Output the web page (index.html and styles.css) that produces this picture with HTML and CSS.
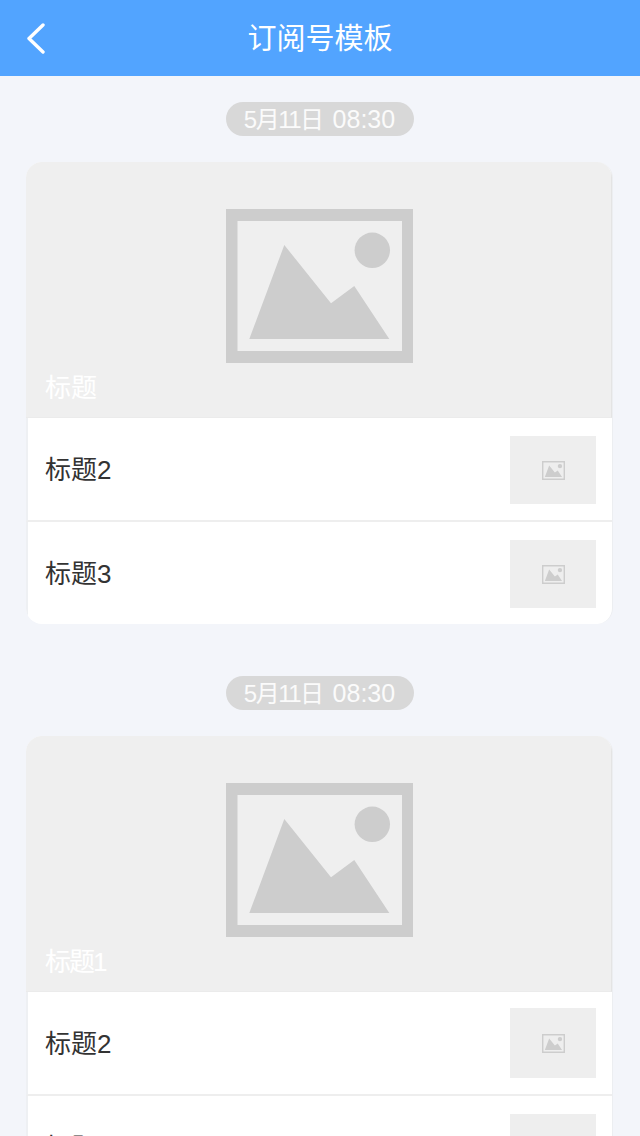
FILE: index.html
```html
<!DOCTYPE html>
<html lang="zh-CN">
<head>
  <meta charset="UTF-8" />
  <title>订阅号模板</title>
  <meta name="viewport" content="width=device-width, initial-scale=1" />
  <link rel="stylesheet" href="styles.css">
</head>
<body>

  <svg class="sprite" width="0" height="0">
    <symbol id="pic" viewBox="0 0 187.5 154">
      <path fill="#cdcdcd" fill-rule="evenodd" d="M0 0H187.5V154H0ZM11.5 12V142H176V12Z" />
      <circle fill="#cdcdcd" cx="146.3" cy="41.3" r="17.7" />
      <path fill="#cdcdcd" d="M58.3 36L105 94.3L128.3 77L163.3 130H23.3Z" />
    </symbol>
  </svg>

  <header class="topbar">
    <svg class="back" viewBox="0 0 20 32" width="20" height="32">
      <path d="M17 3L3 16.5L17 30" fill="none" stroke="#fff" stroke-width="3.4" stroke-linecap="round" stroke-linejoin="round" />
    </svg>
    <h1>订阅号模板</h1>
  </header>

  <main class="feed">
    <!-- first message -->
    <section class="msg">
      <div class="time"><span class="pill"><span class="date">5月11日</span><span class="clock">08:30</span></span></div>
      <div class="card">
        <div class="hero">
          <svg class="hero-pic"><use href="#pic" /></svg>
          <div class="hero-title">标题</div>
        </div>
        <div class="row">
          <div class="row-title">标题2</div>
          <div class="thumb"><svg class="thumb-pic"><use href="#pic" /></svg></div>
        </div>
        <div class="row">
          <div class="row-title">标题3</div>
          <div class="thumb"><svg class="thumb-pic"><use href="#pic" /></svg></div>
        </div>
      </div>
    </section>

    <!-- second message -->
    <section class="msg">
      <div class="time"><span class="pill"><span class="date">5月11日</span><span class="clock">08:30</span></span></div>
      <div class="card">
        <div class="hero">
          <svg class="hero-pic"><use href="#pic" /></svg>
          <div class="hero-title hero-title-tight">标题1</div>
        </div>
        <div class="row">
          <div class="row-title">标题2</div>
          <div class="thumb thumb-tall"><svg class="thumb-pic"><use href="#pic" /></svg></div>
        </div>
        <div class="row">
          <div class="row-title">标题3</div>
          <div class="thumb"><svg class="thumb-pic"><use href="#pic" /></svg></div>
        </div>
      </div>
    </section>
  </main>

</body>
</html>
```
FILE: styles.css
```css
* {
  margin: 0;
  padding: 0;
  box-sizing: border-box;
}

html, body {
  height: 100%;
  overflow: hidden;
  background: #f3f5fa;
  font-family: "Liberation Sans", "Noto Sans CJK SC", sans-serif;
}

.sprite {
  display: none;
}

.topbar {
  height: 76px;
  padding-bottom: 4px;
  background: #52a4ff;
  display: flex;
  align-items: center;
  justify-content: center;
  position: relative;
}

.topbar h1 {
  color: #fff;
  font-size: 29px;
  font-weight: 400;
}

.back {
  position: absolute;
  left: 26px;
  top: 22px;
}

.feed {
  padding: 26px 27px 0 26px;
  display: flex;
  flex-direction: column;
  gap: 52px;
}

.time {
  display: flex;
  justify-content: center;
  margin-bottom: 26px;
}

.pill {
  width: 188px;
  height: 34px;
  line-height: 34px;
  border-radius: 17px;
  background: #d8d8d8;
  color: #fbfbfb;
  display: flex;
  align-items: baseline;
  justify-content: center;
  gap: 10px;
}

.date {
  font-size: 24px;
  letter-spacing: -1.5px;
}

.clock {
  font-size: 25px;
}

.card {
  background: #fff;
  border-radius: 16px;
  border-right: 1px solid #eceef1;
  overflow: hidden;
}

.hero {
  height: 256px;
  background: #efefef;
  border-bottom: 1px solid #ebebeb;
  border-right: 1px solid #e4e4e4;
  padding: 47px 0 0 2px;
  position: relative;
  display: flex;
  justify-content: center;
}

.hero-pic {
  width: 187.5px;
  height: 154px;
}

.hero-title {
  position: absolute;
  left: 19px;
  bottom: 13px;
  color: #fff;
  font-size: 26px;
}

.hero-title-tight {
  letter-spacing: -2px;
}

.row {
  height: 104px;
  padding: 0 16px 0 17px;
  border-left: 2px solid #eef0f3;
  border-bottom: 2px solid #eeeeee;
  display: flex;
  justify-content: space-between;
  align-items: center;
}

.row:last-child {
  height: 102px;
  border-bottom: none;
}

.row-title {
  color: #333;
  font-size: 26px;
  margin-bottom: 4px;
}

.thumb {
  width: 86px;
  height: 68px;
  margin-top: 2px;
  background: #eeeeee;
  display: flex;
  align-items: center;
  justify-content: center;
}

.thumb-tall {
  height: 70px;
  margin-top: 0;
}

.thumb-pic {
  width: 23px;
  height: 19px;
}
```
